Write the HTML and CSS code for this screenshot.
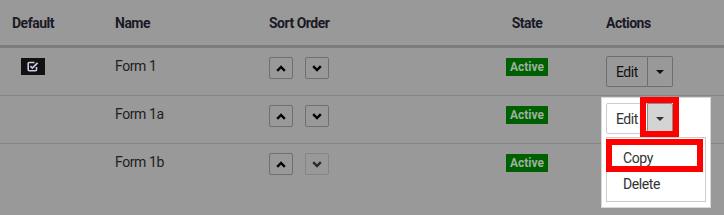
FILE: index.html
```html
<!DOCTYPE html>
<html lang="en">
<head>
    <meta charset="UTF-8">
    <title>Forms</title>
    <link rel="stylesheet" href="styles.css">
</head>
<body>
    <div class="forms">
        <div class="row head">
            <div class="cell">Default</div>
            <div class="cell">Name</div>
            <div class="cell">Sort Order</div>
            <div class="cell center">State</div>
            <div class="cell">Actions</div>
        </div>

        <div class="row">
            <div class="cell">
                <span class="default-mark">
                    <svg width="12" height="11" viewBox="0 0 12 11">
                        <path d="M7.5 1.5H2.2a1 1 0 0 0-1 1v6.3a1 1 0 0 0 1 1h6.3a1 1 0 0 0 1-1V6" fill="none" stroke="#c9cfe0" stroke-width="1.6"/>
                        <path d="M3.4 5.2l1.9 1.9L10.6 1.8" fill="none" stroke="#c9cfe0" stroke-width="1.7"/>
                    </svg>
                </span>
            </div>
            <div class="cell">Form 1</div>
            <div class="cell sort">
                <button class="sort-btn"><svg width="10" height="7" viewBox="0 0 10 7"><path d="M1.2 5.8L5 2l3.8 3.8" fill="none" stroke="#000" stroke-width="2.4"/></svg></button>
                <button class="sort-btn"><svg width="10" height="7" viewBox="0 0 10 7"><path d="M1.2 1.2L5 5l3.8-3.8" fill="none" stroke="#000" stroke-width="2.4"/></svg></button>
            </div>
            <div class="cell center"><span class="badge">Active</span></div>
            <div class="cell">
                <div class="btn-group">
                    <button class="btn">Edit</button>
                    <button class="btn caret-btn"><span class="caret"></span></button>
                </div>
            </div>
        </div>

        <div class="row">
            <div class="cell"></div>
            <div class="cell">Form 1a</div>
            <div class="cell sort">
                <button class="sort-btn"><svg width="10" height="7" viewBox="0 0 10 7"><path d="M1.2 5.8L5 2l3.8 3.8" fill="none" stroke="#000" stroke-width="2.4"/></svg></button>
                <button class="sort-btn"><svg width="10" height="7" viewBox="0 0 10 7"><path d="M1.2 1.2L5 5l3.8-3.8" fill="none" stroke="#000" stroke-width="2.4"/></svg></button>
            </div>
            <div class="cell center"><span class="badge">Active</span></div>
            <div class="cell actions-open">
                <div class="spotlight"></div>
                <div class="btn-group lit">
                    <button class="btn">Edit</button>
                    <button class="btn caret-btn"><span class="caret"></span></button>
                </div>
                <div class="mark mark-caret"></div>
                <ul class="menu">
                    <li>Copy</li>
                    <li>Delete</li>
                </ul>
                <div class="mark mark-copy"></div>
            </div>
        </div>

        <div class="row last">
            <div class="cell"></div>
            <div class="cell">Form 1b</div>
            <div class="cell sort">
                <button class="sort-btn"><svg width="10" height="7" viewBox="0 0 10 7"><path d="M1.2 5.8L5 2l3.8 3.8" fill="none" stroke="#000" stroke-width="2.4"/></svg></button>
                <button class="sort-btn disabled"><svg width="10" height="7" viewBox="0 0 10 7"><path d="M1.2 1.2L5 5l3.8-3.8" fill="none" stroke="#2a2a2a" stroke-width="2.4"/></svg></button>
            </div>
            <div class="cell center"><span class="badge">Active</span></div>
            <div class="cell"></div>
        </div>
    </div>
</body>
</html>
```

FILE: styles.css
```css
html, body {
    height: 215px;
    overflow: hidden;
}
body {
    margin: 0;
    background: #999999;
    font-family: "Roboto", sans-serif;
    font-size: 14px;
    letter-spacing: -0.4px;
    color: #1f1d22;
}
.forms {
    width: 724px;
    height: 215px;
}
.row {
    display: grid;
    grid-template-columns: 103px 154px 203px 134px 1fr;
    height: 47px;
    border-bottom: 1px solid #858585;
}
.row.last {
    border-bottom: none;
}
.head {
    height: 45px;
    border-bottom: 3px solid #7c7c7c;
    align-items: center;
    font-weight: bold;
    letter-spacing: -0.5px;
    color: #1a1a26;
}
.cell {
    padding-left: 12px;
    padding-top: 8px;
    line-height: 20px;
    box-sizing: border-box;
}
.head .cell {
    padding-top: 0;
}
.center {
    text-align: center;
    padding-left: 0;
}
.default-mark {
    display: flex;
    align-items: center;
    justify-content: center;
    width: 24px;
    height: 17px;
    margin: 2px 0 0 9px;
    background: #111;
}
.sort {
    display: flex;
    gap: 12px;
    align-items: flex-start;
}
.sort-btn {
    display: flex;
    align-items: center;
    justify-content: center;
    width: 24px;
    height: 22px;
    margin-top: 1px;
    padding: 0;
    background: transparent;
    border: 1px solid #6f6f6f;
    border-radius: 2px;
}
.sort-btn.disabled {
    border-color: #858585;
}
.badge {
    display: inline-block;
    margin-top: 2px;
    width: 42px;
    height: 18px;
    line-height: 18px;
    font-size: 12px;
    font-weight: bold;
    letter-spacing: 0;
    background: #005f00;
    color: #9db29d;
}
.btn-group {
    display: flex;
    width: 67px;
    height: 31px;
    position: relative;
    z-index: 1;
}
.btn {
    font-family: inherit;
    font-size: 14px;
    letter-spacing: -0.4px;
    color: #111;
    background: transparent;
    border: 1px solid #6e6e6e;
    border-radius: 2px 0 0 2px;
    width: 42px;
    padding: 0;
}
.caret-btn {
    width: 25px;
    border-left: none;
    border-radius: 0 2px 2px 0;
    display: flex;
    align-items: center;
    justify-content: center;
}
.caret {
    width: 0;
    height: 0;
    border-left: 4px solid transparent;
    border-right: 4px solid transparent;
    border-top: 4px solid #111;
}
.actions-open {
    position: relative;
    padding-top: 7px;
}
.spotlight {
    position: absolute;
    left: 7px;
    top: 1px;
    width: 110px;
    height: 111px;
    box-sizing: border-box;
    background: #fff;
    border: 1px solid #d8d8d8;
}
.lit .btn {
    background: #fff;
    border-color: #cccccc;
    color: #333;
}
.lit .caret-btn {
    background: #d4d4d4;
    border: 1px solid #8c8c8c;
    margin-left: -1px;
    width: 26px;
}
.lit .caret {
    border-top-color: #333;
}
.menu {
    position: absolute;
    left: 12px;
    top: 41px;
    width: 100px;
    height: 65px;
    margin: 0;
    padding: 7px 0 0;
    box-sizing: border-box;
    list-style: none;
    background: #fff;
    border: 1px solid #cccccc;
    z-index: 2;
    color: #333;
}
.menu li {
    padding-left: 16px;
    height: 26px;
    line-height: 26px;
}
.mark {
    position: absolute;
    border: 6px solid #ff0000;
    box-sizing: border-box;
    z-index: 3;
}
.mark-caret {
    left: 46px;
    top: 1px;
    width: 39px;
    height: 40px;
}
.mark-copy {
    left: 12px;
    top: 43px;
    width: 97px;
    height: 33px;
}
```
